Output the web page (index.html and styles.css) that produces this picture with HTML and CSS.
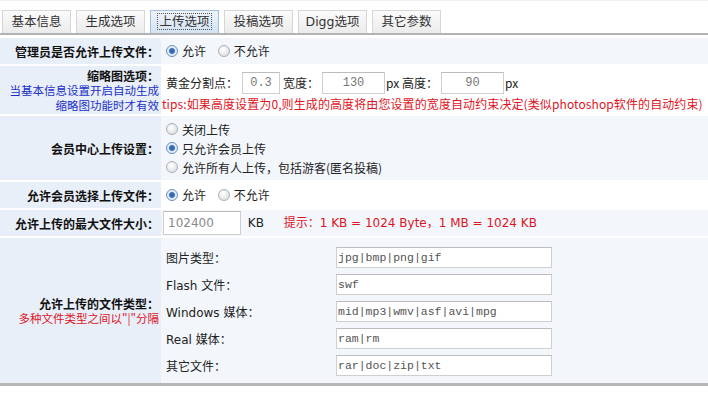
FILE: index.html
```html
<!DOCTYPE html>
<html lang="zh-CN">
<head>
    <meta charset="UTF-8">
    <title>上传选项</title>
    <link rel="stylesheet" href="styles.css">
</head>
<body>
    <div class="page">
        <ul class="tabs">
            <li class="tab">基本信息</li>
            <li class="tab">生成选项</li>
            <li class="tab active"><span class="focus">上传选项</span></li>
            <li class="tab">投稿选项</li>
            <li class="tab">Digg选项</li>
            <li class="tab">其它参数</li>
        </ul>

        <table class="form">
            <tr class="row-a">
                <th>管理员是否允许上传文件：</th>
                <td>
                    <label class="radio"><input type="radio" name="admin" checked>允许</label>
                    <label class="radio"><input type="radio" name="admin">不允许</label>
                </td>
            </tr>
            <tr class="row-b thumb">
                <th>
                    <div class="line">缩略图选项：</div>
                    <div class="line note blue">当基本信息设置开启自动生成</div>
                    <div class="line note blue">缩略图功能时才有效</div>
                </th>
                <td>
                    <div class="inline">
                        黄金分割点：<input class="box small" type="text" value="0.3">
                        宽度：<input class="box mid" type="text" value="130">
                        px 高度：<input class="box mid" type="text" value="90">px
                    </div>
                    <div class="tips">tips:如果高度设置为0,则生成的高度将由您设置的宽度自动约束决定(类似photoshop软件的自动约束)</div>
                </td>
            </tr>
            <tr class="row-a member">
                <th>会员中心上传设置：</th>
                <td>
                    <label class="radio"><input type="radio" name="member">关闭上传</label>
                    <label class="radio"><input type="radio" name="member" checked>只允许会员上传</label>
                    <label class="radio"><input type="radio" name="member">允许所有人上传，包括游客(匿名投稿)</label>
                </td>
            </tr>
            <tr class="row-b">
                <th>允许会员选择上传文件：</th>
                <td>
                    <label class="radio"><input type="radio" name="choose" checked>允许</label>
                    <label class="radio"><input type="radio" name="choose">不允许</label>
                </td>
            </tr>
            <tr class="row-a">
                <th>允许上传的最大文件大小：</th>
                <td>
                    <input class="box size" type="text" value="102400"> KB
                    <span class="hint">提示：1 KB = 1024 Byte，1 MB = 1024 KB</span>
                </td>
            </tr>
            <tr class="row-a types">
                <th>
                    <div class="line">允许上传的文件类型：</div>
                    <div class="line note red">多种文件类型之间以"|"分隔</div>
                </th>
                <td>
                    <div class="type-grid">
                        <span>图片类型：</span>
                        <input class="box ext" type="text" value="jpg|bmp|png|gif">
                        <span>Flash 文件：</span>
                        <input class="box ext" type="text" value="swf">
                        <span>Windows 媒体：</span>
                        <input class="box ext" type="text" value="mid|mp3|wmv|asf|avi|mpg">
                        <span>Real 媒体：</span>
                        <input class="box ext" type="text" value="ram|rm">
                        <span>其它文件：</span>
                        <input class="box ext" type="text" value="rar|doc|zip|txt">
                    </div>
                </td>
            </tr>
        </table>
    </div>
</body>
</html>
```

FILE: styles.css
```css
body {
    margin: 0;
    font-family: "DejaVu Sans", "Noto Sans CJK SC", sans-serif;
    font-size: 12px;
    color: #222;
    background: #fff;
}

.page {
    border-top: 1px solid #eef1f5;
    padding-top: 9px;
}

.tabs {
    list-style: none;
    margin: 0;
    padding: 0 0 0 2px;
    display: flex;
    gap: 5px;
    height: 23px;
    border-bottom: 2px solid #b3b3b3;
}

.tab {
    width: 67px;
    height: 22px;
    line-height: 21px;
    text-align: center;
    border: 1px solid #d6d6d6;
    border-bottom: none;
    background: linear-gradient(#fbfbfb, #ebebeb);
    color: #333;
    font-size: 12.5px;
}

.tab.active {
    background: linear-gradient(#eef4fb, #d3e2f3);
    border-color: #a7bfdc;
}

.focus {
    outline: 1px dotted #555;
    outline-offset: 0;
    padding: 0 1px;
}

.form {
    width: 100%;
    border-collapse: collapse;
    margin-top: 1px;
    border-bottom: 3px solid #b7b7b7;
}

.form th,
.form td {
    border-top: 2px solid #fff;
    padding: 0;
    vertical-align: middle;
}

.form th {
    width: 159px;
    padding-right: 2px;
    text-align: right;
    font-weight: bold;
    color: #111;
    background: #e9eff8;
    font-family: "Noto Sans CJK SC", sans-serif;
}

.line {
    height: 15px;
    line-height: 15px;
    white-space: nowrap;
}

.form td {
    padding-left: 5px;
    height: 26px;
}

.row-a td {
    background: #f3f7fc;
}

.row-b td {
    background: #fff;
}

.note {
    font-weight: normal;
    font-size: 11.5px;
}

.blue {
    color: #1930c8;
}

.red {
    color: #e0141e;
}

.radio {
    display: inline-flex;
    align-items: center;
    margin-right: 8px;
    font-family: "Noto Sans CJK SC", sans-serif;
}

.radio input {
    appearance: none;
    width: 12px;
    height: 12px;
    margin: 0 4px 0 0;
    border-radius: 50%;
    border: 1px solid #a8b0ba;
    background: radial-gradient(circle at 40% 35%, #fff, #d8d8d8);
}

.radio input:checked {
    border-color: #6e8db4;
    background: radial-gradient(circle, #2e5ea8 0, #3f74c4 2.5px, #dfe8f4 3.5px, #f4f7fb);
}

.thumb td {
    height: 48px;
}

.inline {
    display: flex;
    align-items: center;
    gap: 1px;
    padding-top: 3px;
    font-family: "Noto Sans CJK SC", sans-serif;
}

.box {
    box-sizing: border-box;
    border: 1px solid #cfcfcf;
    border-top-color: #bcbcbc;
    background: #fff;
    color: #777;
    font-size: 12px;
    padding: 0 4px;
    margin: 0;
}

.small,
.mid {
    height: 22px;
    text-align: center;
    font-family: "Liberation Mono", monospace;
}

.small {
    width: 38px;
    margin-left: 3px;
    margin-right: 2px;
}

.mid {
    width: 63px;
    margin-left: 2px;
}

.tips {
    color: #e0141e;
    margin-left: -4px;
    margin-top: 1px;
    font-family: "Noto Sans CJK SC", sans-serif;
    font-size: 12px;
    white-space: nowrap;
    letter-spacing: 0.1px;
}

.member td {
    height: 64px;
}

.member .radio {
    display: flex;
    height: 19px;
}

.size {
    width: 78px;
    height: 24px;
    margin-left: -3px;
    margin-right: 3px;
    font-family: "DejaVu Sans", sans-serif;
    color: #888;
}

.hint {
    color: #e0141e;
    margin-left: 16px;
}

.types td {
    height: 145px;
}

.type-grid {
    display: grid;
    grid-template-columns: 170px 216px;
    grid-auto-rows: 27px;
    align-items: center;
    padding-top: 1px;
}

.ext {
    height: 21px;
    font-family: "Liberation Mono", monospace;
    font-size: 11.5px;
    color: #555;
    padding-left: 1px;
}
```
